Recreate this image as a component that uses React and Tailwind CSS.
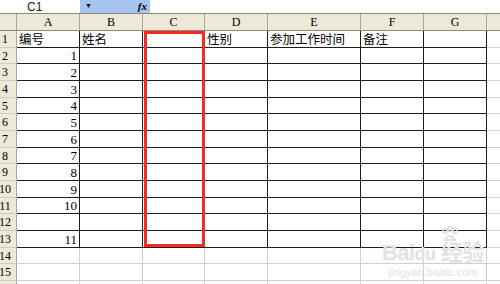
import React from 'react';

const cols = [
  { key: 'A', w: 63 },
  { key: 'B', w: 63 },
  { key: 'C', w: 62 },
  { key: 'D', w: 63 },
  { key: 'E', w: 93 },
  { key: 'F', w: 63 },
  { key: 'G', w: 63 },
  { key: 'H', w: 40 },
];

const rowHeights = [17, 16, 17, 17, 16, 17, 17, 16, 17, 17, 16, 17, 17, 16, 17, 17];

const header = { A: '编号', B: '姓名', D: '性别', E: '参加工作时间', F: '备注' };
const numbers = { 2: '1', 3: '2', 4: '3', 5: '4', 6: '5', 7: '6', 8: '7', 9: '8', 10: '9', 11: '10', 13: '11' };

function Cell({ row, col, ci, h }) {
  const dark = row <= 13 && ci < 7;
  let content = null;
  if (row === 1 && header[col.key]) {
    content = <span className="pl-[2px] text-[12.5px] leading-none">{header[col.key]}</span>;
  } else if (col.key === 'A' && numbers[row]) {
    content = <span className="ml-auto pr-[2px] text-[13px] leading-none">{numbers[row]}</span>;
  }
  return (
    <div
      className={`flex items-end pb-[1px] shrink-0 border-r border-b ${
        dark ? 'border-r-[#1c1c1c] border-b-[#1c1c1c]' : 'border-r-[#d0d0d0] border-b-[#d0d0d0]'
      }`}
      style={{ width: col.w, height: h }}
    >
      {content}
    </div>
  );
}

export default function App() {
  return (
    <div
      className="relative w-[500px] h-[284px] overflow-hidden bg-white text-black"
      style={{ fontFamily: '"Liberation Serif", "Noto Sans CJK SC", serif' }}
    >
      {/* formula bar */}
      <div className="flex h-[13px] items-center">
        <div className="w-[80px] pl-[27px] text-[12px] leading-none text-[#222]" style={{ fontFamily: '"Liberation Sans", sans-serif' }}>
          C1
        </div>
        <div className="flex h-full w-[70px] items-center justify-between bg-[#a8c4f0] pl-[5px] pr-[3px]">
          <span className="text-[7px] leading-none">▼</span>
          <span className="text-[11px] font-bold italic leading-none">fx</span>
        </div>
        <div className="flex-1" />
      </div>
      <div className="h-[1px] bg-[#8c8a80]" />

      {/* column header */}
      <div className="flex h-[17px] bg-[#ece9d8] border-b border-b-[#8c8a80]">
        <div className="w-[17px] shrink-0 border-r border-r-[#aca899]" />
        {cols.map((c) => (
          <div
            key={c.key}
            className="flex shrink-0 items-center justify-center border-r border-r-[#aca899] text-[12px] leading-none"
            style={{ width: c.w }}
          >
            {c.key !== 'H' ? c.key : ''}
          </div>
        ))}
      </div>

      {/* rows */}
      {rowHeights.map((h, i) => {
        const row = i + 1;
        return (
          <div key={row} className="flex">
            <div
              className="w-[17px] shrink-0 overflow-hidden bg-[#ece9d8] border-r border-b border-r-[#aca899] border-b-[#cfccbd]"
              style={{ height: h }}
            >
              <div className="-ml-[7px] flex h-full w-[24px] items-center justify-center text-[12px] leading-none">
                {row}
              </div>
            </div>
            {cols.map((c, ci) => (
              <Cell key={c.key} row={row} col={c} ci={ci} h={h} />
            ))}
          </div>
        );
      })}

      {/* selection highlight */}
      <div className="absolute left-[144px] top-[31px] h-[216px] w-[61px] border-[3px] border-[#ff2626]" />

      {/* watermark */}
      <div
        className="absolute left-[382px] top-[226px] flex flex-col items-center text-[#e2e2e2] leading-none"
        style={{ fontFamily: '"Liberation Sans", "Noto Sans CJK SC", sans-serif' }}
      >
        <svg width="20" height="16" viewBox="0 0 20 16" className="ml-[34px]">
          <g fill="none" stroke="#dcdcdc" strokeWidth="1.5">
            <ellipse cx="5" cy="5" rx="2" ry="2.5" />
            <ellipse cx="10" cy="3" rx="2" ry="2.5" />
            <ellipse cx="15" cy="5" rx="2" ry="2.5" />
            <path d="M5 14 Q10 6 15 14 Z" />
          </g>
        </svg>
        <div className="text-[22px] font-bold tracking-tight">Bai<span className="text-[18px]">du</span> 经验</div>
        <div className="mt-[3px] text-[11px]">jingyan.baidu.com</div>
      </div>
    </div>
  );
}
